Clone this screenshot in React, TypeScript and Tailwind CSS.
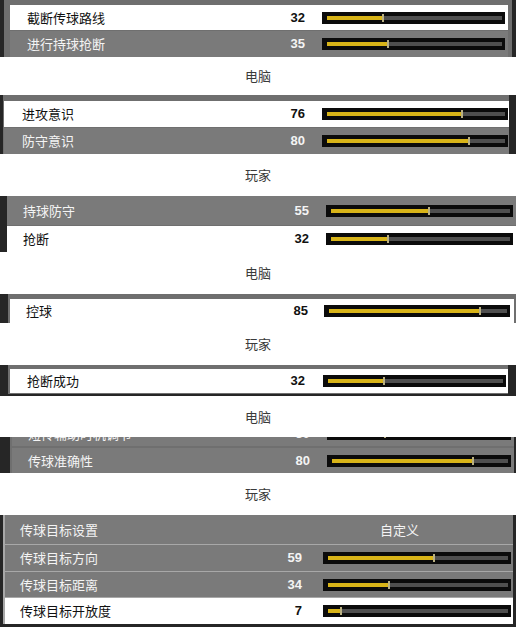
import type { ReactNode } from 'react';

type Row = { label: string; value?: number; right?: string; white?: boolean; h: string };

function Bar({ value, w }: { value: number; w: string }) {
  return (
    <div className={`relative h-[12px] bg-[#0b0b0b] ${w}`}>
      <div className="absolute left-[5px] right-[3px] top-[4px] h-[4px] bg-[#4f4f4f]">
        <div className="absolute left-0 top-0 h-full bg-[#d8b418]" style={{ width: `${value}%` }} />
        <div
          className="absolute top-[-2px] h-[8px] w-[2px] bg-[#b9b083]"
          style={{ left: `calc(${value}% - 1px)` }}
        />
      </div>
    </div>
  );
}

function StatRow({ row, pl, gap, barW, mr }: { row: Row; pl: string; gap: string; barW: string; mr: string }) {
  const tone = row.white ? 'bg-white text-[#111]' : 'bg-[#7a7a7a] text-[#f4f4f4]';
  return (
    <div className={`flex items-center ${row.h} ${tone}`}>
      <div className={`flex-1 text-[13px] ${pl}`}>{row.label}</div>
      {row.right ? (
        <div className={`text-[13px] ${barW} ${mr} pl-[57px]`}>{row.right}</div>
      ) : (
        <>
          <div className="text-[13px] font-bold [font-family:'Liberation_Sans',Arial,sans-serif]">{row.value}</div>
          <div className={`${gap} ${mr}`}>
            <Bar value={row.value ?? 0} w={barW} />
          </div>
        </>
      )}
    </div>
  );
}

function Caption({ text, h }: { text: string; h: string }) {
  return <div className={`flex items-center justify-center text-[13px] text-[#3a3a3a] ${h}`}>{text}</div>;
}

function Frame({ cls, children }: { cls: string; children: ReactNode }) {
  return <div className={`flex flex-col bg-[#6f6f6f] ${cls}`}>{children}</div>;
}

export default function App() {
  return (
    <div className="w-[516px] h-[627px] overflow-hidden bg-white [font-family:'Noto_Sans_CJK_SC','Noto_Sans',sans-serif]">
      {/* 1 */}
      <Frame cls="border-l-[4px] border-r-[4px] border-[#262626] pt-[5px] pl-[6px] pr-[4px] gap-[1px]">
        <StatRow row={{ label: '截断传球路线', value: 32, white: true, h: 'h-[25px]' }} pl="pl-[17px]" gap="ml-[17px]" barW="w-[183px]" mr="mr-[3px]" />
        <StatRow row={{ label: '进行持球抢断', value: 35, h: 'h-[26px]' }} pl="pl-[17px]" gap="ml-[17px]" barW="w-[183px]" mr="mr-[3px]" />
      </Frame>
      <Caption text="电脑" h="h-[38px]" />

      {/* 2 */}
      <Frame cls="border-l-[3px] border-r-[7px] border-[#262626] pt-[6px] pl-[1px] gap-[1px]">
        <StatRow row={{ label: '进攻意识', value: 76, white: true, h: 'h-[26px]' }} pl="pl-[18px]" gap="ml-[17px]" barW="w-[186px]" mr="mr-[1px]" />
        <StatRow row={{ label: '防守意识', value: 80, h: 'h-[26px]' }} pl="pl-[18px]" gap="ml-[17px]" barW="w-[186px]" mr="mr-[1px]" />
      </Frame>
      <Caption text="玩家" h="h-[42px]" />

      {/* 3 */}
      <Frame cls="border-l-[7px] border-[#262626] gap-[1px]">
        <StatRow row={{ label: '持球防守', value: 55, h: 'h-[29px]' }} pl="pl-[16px]" gap="ml-[17px]" barW="w-[187px]" mr="mr-[3px]" />
        <StatRow row={{ label: '抢断', value: 32, white: true, h: 'h-[26px]' }} pl="pl-[16px]" gap="ml-[17px]" barW="w-[187px]" mr="mr-[3px]" />
      </Frame>
      <Caption text="电脑" h="h-[42px]" />

      {/* 4 */}
      <Frame cls="border-l-[8px] border-[#262626] pt-[5px] pl-[2px] pr-[2px]">
        <StatRow row={{ label: '控球', value: 85, white: true, h: 'h-[24px]' }} pl="pl-[16px]" gap="ml-[16px]" barW="w-[186px]" mr="mr-[4px]" />
      </Frame>
      <Caption text="玩家" h="h-[42px]" />

      {/* 5 */}
      <Frame cls="border-l-[8px] border-r-[8px] border-b-[2px] border-[#262626] pt-[4px] pl-[2px] pb-[1px]">
        <StatRow row={{ label: '抢断成功', value: 32, white: true, h: 'h-[24px]' }} pl="pl-[17px]" gap="ml-[18px]" barW="w-[183px]" mr="mr-[2px]" />
      </Frame>
      <Caption text="电脑" h="h-[41px]" />

      {/* 6 */}
      <Frame cls="border-l-[10px] border-r-[2px] border-[#262626] pl-[2px] gap-[2px]">
        <div className="h-[9px] overflow-hidden flex flex-col justify-end">
          <div className="shrink-0">
            <StatRow row={{ label: '短传辅助时机调节', value: 30, h: 'h-[25px]' }} pl="pl-[16px]" gap="ml-[17px]" barW="w-[184px]" mr="mr-[3px]" />
          </div>
        </div>
        <StatRow row={{ label: '传球准确性', value: 80, h: 'h-[25px]' }} pl="pl-[16px]" gap="ml-[17px]" barW="w-[184px]" mr="mr-[3px]" />
      </Frame>
      <Caption text="玩家" h="h-[42px]" />

      {/* 7 */}
      <Frame cls="border-l-[3px] border-r-[3px] border-b-[3px] border-[#262626] pl-[2px] gap-[1px] bg-[#a8a8a8]">
        <StatRow row={{ label: '传球目标设置', right: '自定义', h: 'h-[29px]' }} pl="pl-[15px]" gap="ml-[21px]" barW="w-[188px]" mr="mr-[2px]" />
        <StatRow row={{ label: '传球目标方向', value: 59, h: 'h-[26px]' }} pl="pl-[15px]" gap="ml-[21px]" barW="w-[188px]" mr="mr-[2px]" />
        <StatRow row={{ label: '传球目标距离', value: 34, h: 'h-[25px]' }} pl="pl-[15px]" gap="ml-[21px]" barW="w-[188px]" mr="mr-[2px]" />
        <StatRow row={{ label: '传球目标开放度', value: 7, white: true, h: 'h-[26px]' }} pl="pl-[15px]" gap="ml-[21px]" barW="w-[188px]" mr="mr-[2px]" />
      </Frame>
    </div>
  );
}
